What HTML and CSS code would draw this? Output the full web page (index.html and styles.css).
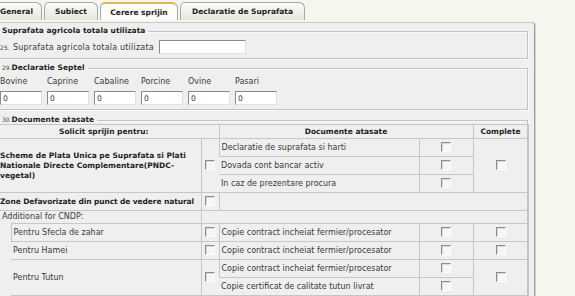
FILE: index.html
```html
<!DOCTYPE html>
<html>
<head>
<meta charset="utf-8">
<link rel="stylesheet" href="styles.css">
</head>
<body>
<div class="tabs">
  <div class="tab t-general">General</div>
  <div class="tab t-subiect">Subiect</div>
  <div class="tab t-cerere active">Cerere sprijin</div>
  <div class="tab t-decl">Declaratie de Suprafata</div>
</div>
<div class="panel">
  <fieldset class="fs fs1">
    <legend>Suprafata agricola totala utilizata</legend>
    <div class="row">
      <span class="lbl"><span class="num">25.</span> Suprafata agricola totala utilizata</span>
      <input class="txt wide" type="text" value="">
    </div>
  </fieldset>
  <fieldset class="fs fs2">
    <legend><span class="num">29.</span>Declaratie Septel</legend>
    <div class="animals">
      <label class="animal"><span>Bovine</span><input class="txt" type="text" value="0"></label>
      <label class="animal"><span>Caprine</span><input class="txt" type="text" value="0"></label>
      <label class="animal"><span>Cabaline</span><input class="txt" type="text" value="0"></label>
      <label class="animal"><span>Porcine</span><input class="txt" type="text" value="0"></label>
      <label class="animal"><span>Ovine</span><input class="txt" type="text" value="0"></label>
      <label class="animal"><span>Pasari</span><input class="txt" type="text" value="0"></label>
    </div>
  </fieldset>
  <fieldset class="fs fs3">
    <legend><span class="num">30.</span>Documente atasate</legend>
    <table class="docs">
      <colgroup>
        <col class="c0"><col class="c1"><col class="c2"><col class="c3"><col class="c4"><col class="c5">
      </colgroup>
      <tr class="head">
        <th colspan="3" class="h-solicit">Solicit sprijin pentru:</th>
        <th colspan="2">Documente atasate</th>
        <th>Complete</th>
      </tr>
      <tr class="r">
        <td colspan="2" rowspan="3" class="bold wrap">Scheme de Plata Unica pe Suprafata si Plati Nationale Directe Complementare(PNDC-vegetal)</td>
        <td rowspan="3" class="cb"><span class="chk"></span></td>
        <td>Declaratie de suprafata si harti</td>
        <td class="cb"><span class="chk"></span></td>
        <td rowspan="3" class="cb"><span class="chk"></span></td>
      </tr>
      <tr class="r">
        <td>Dovada cont bancar activ</td>
        <td class="cb"><span class="chk"></span></td>
      </tr>
      <tr class="r">
        <td>In caz de prezentare procura</td>
        <td class="cb"><span class="chk"></span></td>
      </tr>
      <tr class="r">
        <td colspan="2" class="bold tight">Zone Defavorizate din punct de vedere natural</td>
        <td class="cb"><span class="chk"></span></td>
        <td colspan="3"></td>
      </tr>
      <tr class="add">
        <td colspan="2" class="addl">Additional for CNDP:</td>
        <td colspan="4"></td>
      </tr>
      <tr class="r">
        <td rowspan="4" class="indent"></td>
        <td>Pentru Sfecla de zahar</td>
        <td class="cb"><span class="chk"></span></td>
        <td>Copie contract incheiat fermier/procesator</td>
        <td class="cb"><span class="chk"></span></td>
        <td class="cb"><span class="chk"></span></td>
      </tr>
      <tr class="r">
        <td>Pentru Hamei</td>
        <td class="cb"><span class="chk"></span></td>
        <td>Copie contract incheiat fermier/procesator</td>
        <td class="cb"><span class="chk"></span></td>
        <td class="cb"><span class="chk"></span></td>
      </tr>
      <tr class="r">
        <td rowspan="2">Pentru Tutun</td>
        <td rowspan="2" class="cb"><span class="chk"></span></td>
        <td>Copie contract incheiat fermier/procesator</td>
        <td class="cb"><span class="chk"></span></td>
        <td rowspan="2" class="cb"><span class="chk"></span></td>
      </tr>
      <tr class="r">
        <td>Copie certificat de calitate tutun livrat</td>
        <td class="cb"><span class="chk"></span></td>
      </tr>
    </table>
  </fieldset>
</div>
</body>
</html>
```

FILE: styles.css
```css
* { box-sizing: border-box; }

body {
  margin: 0;
  background: #f6f6ee;
  font-family: "DejaVu Sans", Verdana, sans-serif;
  font-size: 8px;
  color: #3a3a3a;
  overflow: hidden;
}

/* tabs */
.tabs {
  display: flex;
  gap: 2px;
  margin-left: -11px;
  padding-top: 2px;
  height: 20px;
  align-items: flex-end;
}
.tab {
  height: 18px;
  display: flex;
  align-items: center;
  justify-content: center;
  font-weight: bold;
  font-size: 7.5px;
  color: #222;
  background: linear-gradient(#fbfbf8, #e7e6dd);
  border: 1px solid #a3a8a8;
  border-bottom: none;
  border-radius: 5px 6px 0 0;
}
.t-general { width: 53px; padding-left: 2px; }
.t-subiect { width: 54px; }
.t-cerere { width: 78px; }
.t-decl { width: 125px; }
.tab.active {
  background: #fcfcfa;
  border-top: 2px solid #e3b55a;
}

/* panel */
.panel {
  margin-top: 2px;
  margin-left: -14px;
  width: 549px;
  height: 300px;
  background: #efefef;
  border: 1px solid #c8c8c8;
  border-right-color: #9c9c9c;
  border-radius: 0 4px 0 0;
  box-shadow: 1px 0 0 #d2d2d2;
  padding: 3px 6px 0 5px;
}

.fs {
  margin: 0;
  min-inline-size: 0;
  border: 1px solid #c3c3c3;
  box-shadow: inset 1px 1px 0 #fafafa, 1px 1px 0 #fafafa;
  padding: 4px 5px 4px 7px;
}
.fs legend {
  font-weight: bold;
  font-size: 7.5px;
  line-height: 10px;
  color: #1e1e1e;
  padding: 0 3px 0 2px;
}
.num {
  font-weight: normal;
  font-size: 6px;
  color: #444;
}

.fs2 { margin-top: 4px; }
.fs3 { margin-top: 5px; padding-top: 0; padding-bottom: 0; }

.row {
  display: flex;
  align-items: center;
  gap: 5px;
  height: 14px;
}
.lbl { white-space: nowrap; letter-spacing: 0.2px; }

.txt {
  display: block;
  height: 14px;
  width: 42px;
  margin: 0;
  padding: 0 2px;
  font-family: "DejaVu Sans", Verdana, sans-serif;
  font-size: 7.6px;
  color: #333;
  background: #fff;
  border: 1px solid;
  border-color: #8a8a8a #e2e2e2 #e2e2e2 #8a8a8a;
  outline: none;
}
.txt.wide { width: 87px; }

.animals {
  display: flex;
  gap: 5px;
}
.animal {
  display: flex;
  flex-direction: column;
  gap: 4px;
  width: 42px;
}
.animal span {
  line-height: 10px;
}

/* table */
.docs {
  margin-top: -1px;
  margin-left: -2px;
  border-collapse: collapse;
  table-layout: fixed;
  width: 530px;
  color: #3a3a3a;
}
.c0 { width: 13px; }
.c1 { width: 190px; }
.c2 { width: 18px; }
.c3 { width: 200px; }
.c4 { width: 54px; }
.c5 { width: 55px; }

.docs th, .docs td {
  border: 1px solid #c6c6c6;
  padding: 0 2px;
  line-height: 10px;
  vertical-align: middle;
  text-align: left;
  white-space: nowrap;
}
.docs tr > :first-child { border-left-style: hidden; }
.docs th {
  height: 14px;
  font-weight: bold;
  font-size: 7.5px;
  color: #1e1e1e;
  text-align: center;
}
.docs th.h-solicit { padding-right: 11px; }
.docs tr.r > td { height: 18px; }
.docs tr.add > td { height: 13px; }
.docs td.bold {
  font-weight: bold;
  font-size: 7.5px;
  color: #1e1e1e;
  padding-left: 2px;
}
.docs td.wrap { white-space: normal; }
.docs td.tight { letter-spacing: -0.1px; overflow: visible; }
.docs td.addl { padding-left: 4px; }
.docs td.cb { text-align: center; padding: 0; }
.docs td.indent {
  border-top-style: hidden;
  border-bottom-style: hidden;
  border-left-style: hidden;
}

.chk {
  display: inline-block;
  vertical-align: middle;
  width: 10px;
  height: 10px;
  background: #f6f6f6;
  border-top: 1px solid #8c8c8c;
  border-left: 1px solid #8c8c8c;
  border-right: 1px solid #fdfdfd;
  border-bottom: 1px solid #fdfdfd;
  box-shadow: inset 1px 1px 0 #d9d9d9;
}
```
